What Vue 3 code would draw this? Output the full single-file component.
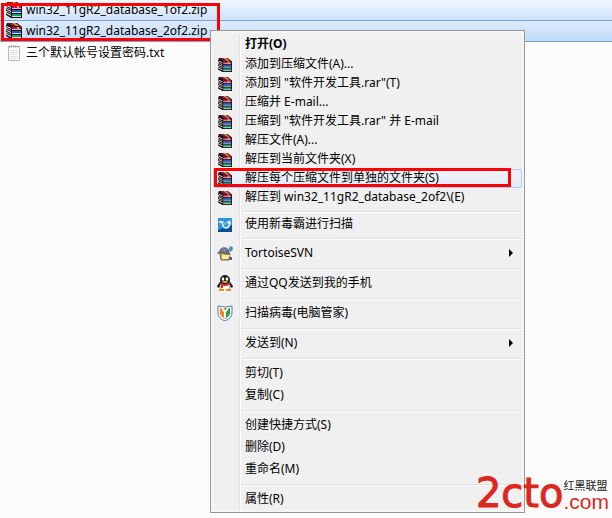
<template>
  <main class="explorer">
    <!-- WinRAR book stack, shared by the file list and the menu -->
    <svg class="sprite" aria-hidden="true">
      <symbol id="icon-rar" viewBox="0 0 16 16">
        <path d="M1 0h10l5 4v12H5L0 13l1-3-1-2 1-3-1-2z" fill="#1c0f18" />
        <path d="M2 0h8l5 3H6z" fill="#8c1238" />
        <path d="M6 0h3l4 3h-3z" fill="#c9a03c" />
        <path d="M6 4h9v2H6z" fill="#c4125a" />
        <path d="M6 8h9v2H6z" fill="#2458c4" />
        <path d="M6 12h9v2H6z" fill="#12a070" />
        <path d="M6 6h9v1H6z" fill="#e8b8cc" />
        <path d="M6 10h9v1H6z" fill="#c4dcf8" />
        <path d="M6 14h9v1H6z" fill="#b8ecd4" />
        <path d="M1 3l4 2v1L1 4zM1 7l4 2v1L1 8zM1 11l4 2v1l-4-2z" fill="#fff" />
        <path d="M1 5l4 2v1L1 6zM1 9l4 2v1l-4-2z" fill="#b8a8a0" />
        <path d="M11 4h2v3h-2z" fill="#d8b050" />
      </symbol>
    </svg>

    <ul class="files">
      <li
        v-for="file in files"
        :key="file.name"
        class="file"
        :class="{ selected: file.selected, focused: file.focused }"
      >
        <svg v-if="file.type === 'zip'" class="icon"><use href="#icon-rar" /></svg>
        <svg v-else class="icon" viewBox="0 0 16 16">
          <path d="M2.500 1.500h11v14h-11z" fill="#fdfdfd" stroke="#b4b8ba" />
          <path d="M4 5.500h8M4 7.500h8M4 9.500h8M4 11.500h8M4 13.500h8" stroke="#dbe2e6" />
          <path d="M3 1.500h10" stroke="#9aa0a6" stroke-width="2" stroke-dasharray="1 1" />
        </svg>
        <span class="file-name">{{ file.name }}</span>
      </li>
    </ul>
    <div class="marker marker-files"></div>

    <div class="menu" role="menu">
      <template v-for="(group, index) in groups" :key="index">
        <div v-if="index > 0" class="separator" role="separator"></div>
        <button
          v-for="item in group"
          :key="item.label"
          type="button"
          role="menuitem"
          class="item"
          :class="{ compact: item.compact, bold: item.bold, hover: item.hover }"
        >
          <span class="glyph">
            <svg v-if="item.icon === 'rar'" class="icon small"><use href="#icon-rar" /></svg>
            <svg v-else-if="item.icon === 'duba'" class="icon small" viewBox="0 0 14 14">
              <path d="M0 0h14v14H0z" fill="#0a4f9c" />
              <path d="M0 0h14v7L0 12z" fill="#2b95de" />
              <path d="M1 4h3q1 6 4 6 3 0 4-5" fill="none" stroke="#fff" stroke-width="1.500" />
              <path d="M8 5l4-3 1 4z" fill="#fff" />
              <path d="M5 3l3 4" stroke="#9fd4f8" />
            </svg>
            <svg v-else-if="item.icon === 'tortoise'" class="icon" viewBox="0 0 16 16">
              <path d="M2 7c1-6 9-6 10-1l1 3-8 2z" fill="#5d6686" />
              <path d="M4 6l6-2M6 3l3 5" stroke="#8e99b8" />
              <path d="M12 5c-1-4 3-5 4-2 0 2-1 3-3 4z" fill="#5a8fae" />
              <path d="M0 7l5-1-1 3H1z" fill="#747b8c" />
              <path d="M3 8h4l1 1h5l-1 6H4z" fill="#c8b35a" stroke="#71643a" />
              <path d="M5 10h8l-2 4H5z" fill="#f4eba0" />
              <path d="M12 12h3v3h-3z" fill="#56607e" />
            </svg>
            <svg v-else-if="item.icon === 'qq'" class="icon" viewBox="0 0 16 16">
              <path d="M3 7l-3 4 1 2 3-3zM13 7l3 4-1 2-3-3z" fill="#1c1c1c" />
              <ellipse cx="8" cy="10" rx="6" ry="5" fill="#1c1c1c" />
              <ellipse cx="8" cy="11" rx="5" ry="4" fill="#fff" />
              <ellipse cx="8" cy="5" rx="5" ry="5" fill="#1c1c1c" />
              <ellipse cx="6" cy="4" rx="1.300" ry="1.800" fill="#fff" />
              <ellipse cx="10" cy="4" rx="1.300" ry="1.800" fill="#fff" />
              <ellipse cx="8" cy="7" rx="3" ry="1" fill="#f5a623" />
              <path d="M3 8q5 3 10 0v2q-5 2-10 0z" fill="#e02a20" />
              <path d="M4 10h2v3H4z" fill="#e02a20" />
              <path d="M2 14h5v2H2zM9 14h5v2H9z" fill="#f08c1c" />
            </svg>
            <svg v-else-if="item.icon === 'guard'" class="icon" viewBox="0 0 16 16">
              <path d="M1 1l7 1 7-1v7q0 5-7 8-7-3-7-8z" fill="#fff" stroke="#4a7cc0" />
              <path d="M3 3h5v11Q3 11 3 8z" fill="#f58220" />
              <path d="M8 3h5v5q0 3-5 6z" fill="#35a043" />
              <path d="M5 3l3 4 3-4M8 7v6" fill="none" stroke="#fff" stroke-width="2" />
            </svg>
          </span>
          <span class="label">{{ item.label }}</span>
          <svg v-if="item.submenu" class="arrow" viewBox="0 0 4 8"><path d="M0 0l4 4-4 4z" /></svg>
          <span v-if="item.hover" class="marker marker-item"></span>
        </button>
      </template>
    </div>

    <div class="watermark">
      <span class="brand">2cto</span>
      <div class="site">
        <span class="site-name">红黑联盟</span>
        <span class="site-domain">.com</span>
      </div>
    </div>
  </main>
</template>

<script setup>
const files = [
  { name: 'win32_11gR2_database_1of2.zip', type: 'zip', selected: true },
  { name: 'win32_11gR2_database_2of2.zip', type: 'zip', selected: true, focused: true },
  { name: '三个默认帐号设置密码.txt', type: 'txt' },
];

const groups = [
  [
    { label: '打开(O)', bold: true },
    { label: '添加到压缩文件(A)...', icon: 'rar', compact: true },
    { label: '添加到 "软件开发工具.rar"(T)', icon: 'rar', compact: true },
    { label: '压缩并 E-mail...', icon: 'rar', compact: true },
    { label: '压缩到 "软件开发工具.rar" 并 E-mail', icon: 'rar', compact: true },
    { label: '解压文件(A)...', icon: 'rar', compact: true },
    { label: '解压到当前文件夹(X)', icon: 'rar', compact: true },
    { label: '解压每个压缩文件到单独的文件夹(S)', icon: 'rar', compact: true, hover: true },
    { label: '解压到 win32_11gR2_database_2of2\\(E)', icon: 'rar', compact: true },
  ],
  [{ label: '使用新毒霸进行扫描', icon: 'duba', compact: true }],
  [{ label: 'TortoiseSVN', icon: 'tortoise', submenu: true }],
  [{ label: '通过QQ发送到我的手机', icon: 'qq' }],
  [{ label: '扫描病毒(电脑管家)', icon: 'guard' }],
  [{ label: '发送到(N)', submenu: true }],
  [{ label: '剪切(T)' }, { label: '复制(C)' }],
  [{ label: '创建快捷方式(S)' }, { label: '删除(D)' }, { label: '重命名(M)' }],
  [{ label: '属性(R)' }],
];
</script>

<style>
body {
  background: #fcfcfc;
}
</style>

<style scoped>
.explorer {
  position: relative;
  min-height: 100vh;
  overflow: hidden;
  box-sizing: border-box;
  font-family: "Noto Sans", "Noto Sans CJK SC", sans-serif;
  font-size: 12px;
  color: #000;
}

.sprite {
  position: absolute;
  width: 0;
  height: 0;
}

.icon {
  width: 16px;
  height: 16px;
  flex: none;
}

.icon.small {
  width: 14px;
  height: 14px;
}

.files {
  margin: 0;
  padding: 0;
  list-style: none;
}

.file {
  display: flex;
  align-items: center;
  gap: 4px;
  height: 21px;
  padding-left: 6px;
  box-sizing: border-box;
  line-height: 18px;
  white-space: nowrap;
}

.file.selected {
  border-bottom: 1px solid #7da2ce;
  background: linear-gradient(#f0f7fe, #cfe3fc);
}

.file.focused {
  background: linear-gradient(#dfecfd, #bfdafb);
}

.marker {
  position: absolute;
  box-sizing: border-box;
  border: 3px solid #fe0000;
  pointer-events: none;
}

.marker-files {
  top: 3px;
  left: 1px;
  width: 219px;
  height: 38px;
}

/* floating context menu */
.menu {
  position: absolute;
  top: 30px;
  left: 210px;
  width: 315px;
  padding: 2px;
  box-sizing: border-box;
  border: 1px solid #979797;
  background: linear-gradient(90deg, #e2e3e3 1px, #fff 1px) 28px 0 / 2px 100% no-repeat, #f0f0f0;
  box-shadow: inset 0 0 0 2px #f5f5f5;
}

.item {
  position: relative;
  display: flex;
  align-items: center;
  width: 100%;
  height: 22px;
  padding: 0;
  border: 0;
  background: none;
  font: inherit;
  color: inherit;
  text-align: left;
  white-space: nowrap;
}

.item.compact {
  height: 19px;
}

.item.bold {
  font-weight: bold;
}

.item.hover {
  border-radius: 3px;
  background: linear-gradient(rgba(240, 245, 251, 0.8), rgba(222, 233, 247, 0.8));
  box-shadow: inset 0 0 0 1px #aecff7;
}

.glyph {
  display: flex;
  width: 20px;
  padding-left: 2px;
  margin-right: 10px;
  justify-content: center;
}

.label {
  flex: 1;
  padding-bottom: 1px;
  line-height: 18px;
}

.arrow {
  width: 4px;
  height: 8px;
  margin-right: 9px;
}

.separator {
  height: 8px;
  margin-left: 28px;
  background: linear-gradient(#e0e0e0 1px, #fff 1px) 0 4px / 100% 2px no-repeat;
}

.marker-item {
  top: -1px;
  left: 1px;
  width: 297px;
  height: 19px;
}

.watermark {
  position: absolute;
  right: 3px;
  bottom: 6px;
  display: flex;
  align-items: flex-end;
  font-family: "Liberation Sans", "Noto Sans CJK SC", sans-serif;
  color: #dc281e;
}

.brand {
  font-family: "DejaVu Sans", sans-serif;
  font-size: 40px;
  line-height: 38px;
  -webkit-text-stroke: 1px #dc281e;
}

.site {
  display: flex;
  flex-direction: column;
}

.site-name {
  color: #222;
  font-size: 11px;
  line-height: 12px;
}

.site-domain {
  font-size: 21px;
  line-height: 20px;
}
</style>
